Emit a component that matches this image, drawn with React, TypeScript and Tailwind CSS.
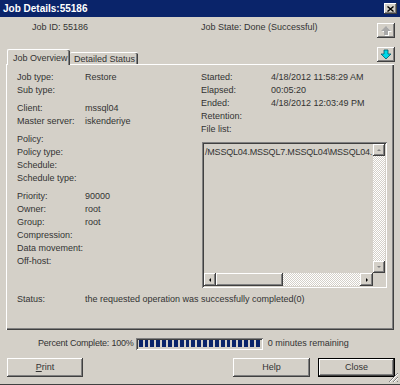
import React from 'react';

const raised = 'shadow-[inset_-1px_-1px_#404040,inset_1px_1px_#ffffff,inset_-2px_-2px_#808080]';
const sunken = 'shadow-[inset_1px_1px_#808080,inset_-1px_-1px_#ffffff,inset_2px_2px_#404040,inset_-2px_-2px_#d4d0c8]';
const track = 'bg-[repeating-conic-gradient(#ffffff_0_25%,#d4d0c8_0_50%)] bg-[length:2px_2px]';

function Row({ label, value, right }: { label: string; value?: string; right?: boolean }) {
  return (
    <div className="flex h-[13px] items-center whitespace-nowrap leading-[13px]">
      <span className={right ? 'w-[70px] shrink-0' : 'w-[68px] shrink-0'}>{label}</span>
      {value && <span>{value}</span>}
    </div>
  );
}

function Arrow({ dir }: { dir: 'up' | 'down' | 'left' | 'right' }) {
  const pts = {
    up: '2,5 4,3 6,5',
    down: '2,3 4,5 6,3',
    left: '5,2 3,4 5,6',
    right: '3,2 5,4 3,6',
  }[dir];
  return (
    <svg width="8" height="8" viewBox="0 0 8 8">
      <polygon points={pts} fill={dir === 'up' || dir === 'down' ? '#808080' : '#000'} />
    </svg>
  );
}

export default function App() {
  const blocks = Array.from({ length: 21 });

  return (
    <div className="relative flex h-[385px] w-[400px] flex-col overflow-hidden border-b border-[#404040] bg-[#d4d0c8] font-['Liberation_Sans',Arial,sans-serif] text-[9px] text-[#333]">
      {/* title bar */}
      <div className="flex h-[17px] shrink-0 items-center justify-between bg-[#0a246a] pl-[3px] pr-[3px]">
        <span className="text-[10px] font-bold leading-none text-white">Job Details:55186</span>
        <div className={`flex h-[11px] w-[13px] items-center justify-center bg-[#d4d0c8] ${raised}`}>
          <svg width="7" height="6" viewBox="0 0 7 6">
            <path d="M0.5 0.5 L6.5 5.5 M6.5 0.5 L0.5 5.5" stroke="#000" strokeWidth="1.4" />
          </svg>
        </div>
      </div>

      {/* header */}
      <div className="-mb-[1px] flex h-[48px] shrink-0">
        <div className="flex flex-1 flex-col justify-between">
          <div className="flex pl-[32px] pt-[4px] leading-[13px]">
            <span className="w-[169px]">Job ID: 55186</span>
            <span>Job State: Done (Successful)</span>
          </div>
          <div className="flex items-end pl-[7px]">
            <div className="relative z-10 h-[16px] w-[63px] rounded-t-[2px] border-l border-t border-white bg-[#d4d0c8] pl-[5px] pt-[2px] shadow-[inset_-1px_0_#404040,inset_-2px_0_#808080]">
              Job Overview
            </div>
            <div className="mb-[1px] h-[12px] w-[68px] rounded-t-[2px] border-t border-white bg-[#d4d0c8] pl-[4px] leading-[12px] shadow-[inset_-1px_0_#404040,inset_-2px_0_#808080]">
              Detailed Status
            </div>
          </div>
        </div>
        <div className="mr-[5px] flex w-[18px] flex-col pt-[6px]">
          <div className={`flex h-[15px] items-center justify-center ${raised}`}>
            <svg width="12" height="11" viewBox="0 0 12 11">
              <polygon points="7,2 12,7 9,7 9,11 5,11 5,7 2,7" fill="#ffffff" />
              <polygon points="6,1 11,6 8,6 8,10 4,10 4,6 1,6" fill="#a8a8a8" />
            </svg>
          </div>
          <div className={`mt-[9px] flex h-[15px] items-center justify-center ${raised}`}>
            <svg width="12" height="11" viewBox="0 0 12 11">
              <polygon points="4,1 8,1 8,5 11,5 6,10 1,5 4,5" fill="#00d8e8" stroke="#005a6a" strokeWidth="0.8" />
            </svg>
          </div>
        </div>
      </div>

      {/* tab panel */}
      <div className="mx-[6px] flex h-[266px] shrink-0 flex-col border-l border-t border-white pl-[10px] pt-[6px] shadow-[inset_-1px_-1px_#404040,inset_-2px_-2px_#808080]">
        <div className="flex">
          <div className="flex w-[184px] shrink-0 flex-col">
            <Row label="Job type:" value="Restore" />
            <Row label="Sub type:" />
            <div className="mt-[5px]">
              <Row label="Client:" value="mssql04" />
              <Row label="Master server:" value="iskenderiye" />
            </div>
            <div className="mt-[5px]">
              <Row label="Policy:" />
              <Row label="Policy type:" />
              <Row label="Schedule:" />
              <Row label="Schedule type:" />
            </div>
            <div className="mt-[5px]">
              <Row label="Priority:" value="90000" />
              <Row label="Owner:" value="root" />
              <Row label="Group:" value="root" />
              <Row label="Compression:" />
              <Row label="Data movement:" />
              <Row label="Off-host:" />
            </div>
          </div>
          <div className="flex flex-col">
            <Row right label="Started:" value="4/18/2012 11:58:29 AM" />
            <Row right label="Elapsed:" value="00:05:20" />
            <Row right label="Ended:" value="4/18/2012 12:03:49 PM" />
            <Row right label="Retention:" />
            <Row right label="File list:" />
            <div className={`ml-[1px] mt-[6px] flex h-[146px] w-[185px] flex-col p-[2px] ${sunken}`}>
              <div className="flex min-h-0 flex-1">
                <div className="flex-1 overflow-hidden whitespace-nowrap pl-[1px] pt-[2px] text-[9px] leading-[12px] tracking-[-0.2px]">
                  /MSSQL04.MSSQL7.MSSQL04\MSSQL04.
                </div>
                <div className="flex w-[12px] flex-col">
                  <div className={`flex h-[12px] items-center justify-center bg-[#d4d0c8] ${raised}`}>
                    <Arrow dir="up" />
                  </div>
                  <div className={`flex-1 ${track}`} />
                  <div className={`flex h-[12px] items-center justify-center bg-[#d4d0c8] ${raised}`}>
                    <Arrow dir="down" />
                  </div>
                </div>
              </div>
              <div className="flex h-[13px]">
                <div className={`flex w-[12px] items-center justify-center bg-[#d4d0c8] ${raised}`}>
                  <Arrow dir="left" />
                </div>
                <div className={`w-[67px] bg-[#d4d0c8] ${raised}`} />
                <div className={`flex-1 ${track}`} />
                <div className={`flex w-[13px] items-center justify-center bg-[#d4d0c8] ${raised}`}>
                  <Arrow dir="right" />
                </div>
                <div className="w-[12px]" />
              </div>
            </div>
          </div>
        </div>
        <div className="mt-[5px]">
          <Row label="Status:" value="the requested operation was successfully completed(0)" />
        </div>
      </div>

      {/* progress */}
      <div className="mt-[7px] flex h-[13px] items-center whitespace-nowrap pl-[38px]">
        <span className="mr-[2px] tracking-[-0.2px]">Percent Complete: 100%</span>
        <div className={`flex h-[12px] w-[127px] items-center gap-[2px] px-[3px] ${sunken}`}>
          {blocks.map((_, i) => (
            <div key={i} className="h-[7px] w-[4px] bg-[#0a246a]" />
          ))}
        </div>
        <span className="ml-[5px]">0 minutes remaining</span>
      </div>

      {/* buttons */}
      <div className="mt-[8px] flex h-[19px] pl-[7px] pr-[5px]">
        <button className={`w-[76px] bg-[#d4d0c8] text-center ${raised}`}>
          <span className="underline">P</span>rint
        </button>
        <button className={`ml-auto w-[77px] bg-[#d4d0c8] text-center ${raised}`}>Help</button>
        <button className="ml-[8px] w-[77px] border border-black bg-[#d4d0c8] text-center shadow-[inset_-1px_-1px_#404040,inset_1px_1px_#ffffff,inset_-2px_-2px_#808080]">
          Close
        </button>
      </div>

      {/* size grip */}
      <svg className="absolute bottom-[1px] right-[1px]" width="11" height="11" viewBox="0 0 11 11">
        <path d="M10 1 L1 10 M10 5 L5 10 M10 9 L9 10" stroke="#808080" strokeWidth="1" />
        <path d="M10 2 L2 10 M10 6 L6 10" stroke="#ffffff" strokeWidth="1" />
      </svg>
    </div>
  );
}
